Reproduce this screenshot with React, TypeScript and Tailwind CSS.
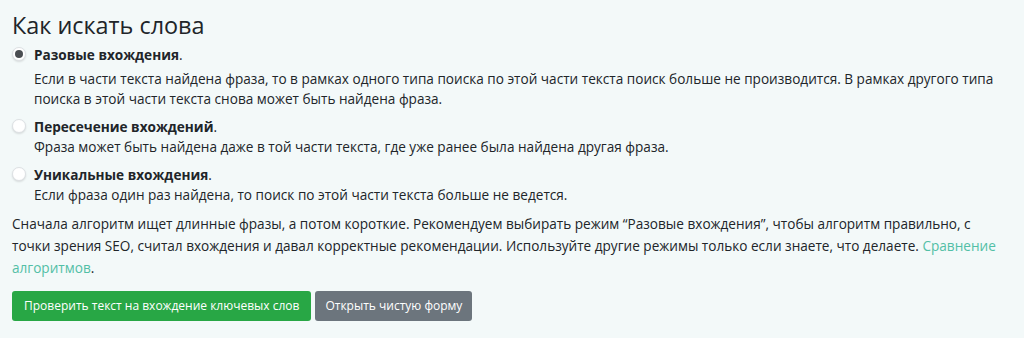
import React from "react";

const modes = [
  {
    title: "Разовые вхождения",
    text: "Если в части текста найдена фраза, то в рамках одного типа поиска по этой части текста поиск больше не производится. В рамках другого типа поиска в этой части текста снова может быть найдена фраза.",
    checked: true,
  },
  {
    title: "Пересечение вхождений",
    text: "Фраза может быть найдена даже в той части текста, где уже ранее была найдена другая фраза.",
    checked: false,
  },
  {
    title: "Уникальные вхождения",
    text: "Если фраза один раз найдена, то поиск по этой части текста больше не ведется.",
    checked: false,
  },
];

export default function App() {
  return (
    <div
      className="min-h-[338px] bg-[#f3f9f9] text-[#212529] px-3 pt-[10px] pb-4"
      style={{ fontFamily: '"Open Sans", "Noto Sans", sans-serif' }}
    >
      <h1 className="text-[23.4px] leading-[30px] font-normal mb-[5px]">Как искать слова</h1>

      {/* MODES */}
      <div className="flex flex-col gap-[8px]">
        {modes.map((m, i) => (
          <div key={i} className="flex">
            <span className="mt-[2px] w-[14px] h-[14px] shrink-0 rounded-full bg-white border border-[#dde1e4] shadow-[0_1px_2px_rgba(0,0,0,0.12)] flex items-center justify-center">
              {m.checked && <span className="w-[8px] h-[8px] rounded-full bg-[#4a4e52]" />}
            </span>
            <div className="ml-[8px] text-[13.6px] leading-[20px]">
              <div className={i === 0 ? "mb-[4px]" : ""}>
                <b className="font-bold">{m.title}</b>.
              </div>
              <div>{m.text}</div>
            </div>
          </div>
        ))}
      </div>

      <p className="mt-[8px] text-[13.6px] leading-[22px]">
        Сначала алгоритм ищет длинные фразы, а потом короткие. Рекомендуем выбирать режим “Разовые вхождения”, чтобы
        алгоритм правильно, с точки зрения SEO, считал вхождения и давал корректные рекомендации. Используйте другие
        режимы только если знаете, что делаете.{" "}
        <a href="#" className="text-[#52bfa6]">
          Сравнение алгоритмов
        </a>
        .
      </p>

      {/* ACTIONS */}
      <div className="mt-[12px] flex gap-[4px]">
        <button className="h-[30px] px-[12px] rounded-[3px] bg-[#28a745] text-white text-[12px]">
          Проверить текст на вхождение ключевых слов
        </button>
        <button className="h-[30px] px-[10px] rounded-[3px] bg-[#6c757d] text-white text-[12px]">
          Открыть чистую форму
        </button>
      </div>
    </div>
  );
}
